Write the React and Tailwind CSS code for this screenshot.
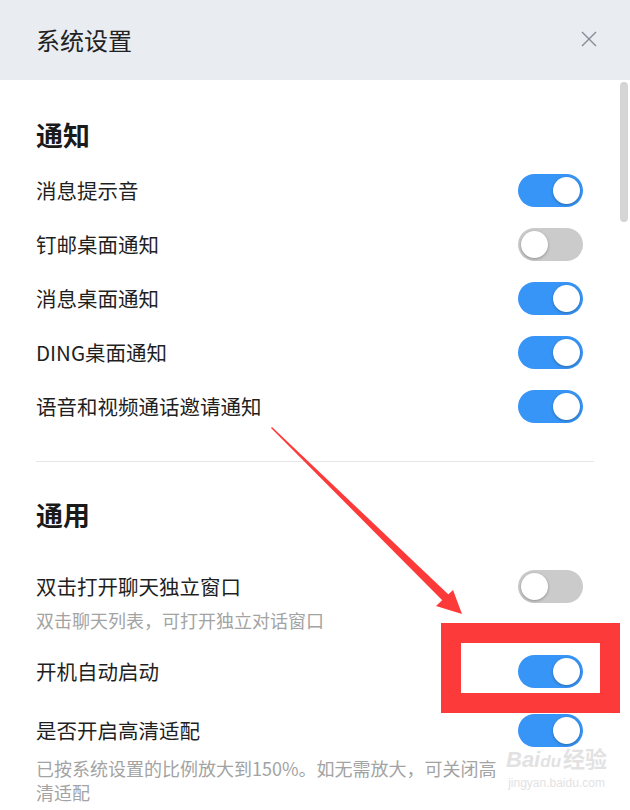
import { useState } from 'react'

const FONT = { fontFamily: '"Noto Sans CJK SC", "Noto Sans", sans-serif' }

function Toggle({ on }) {
  return (
    <div
      className={`flex h-[33px] w-[65px] shrink-0 items-center rounded-full px-[3px] ${
        on ? 'justify-end bg-[#3795f7]' : 'justify-start bg-[#cbcbcb]'
      }`}
    >
      <div className="h-[27px] w-[27px] rounded-full bg-white shadow-[0_1px_3px_rgba(0,0,0,0.3)]" />
    </div>
  )
}

function Row({ label, on, height = 'h-[54px]', className = '' }) {
  return (
    <div className={`flex items-center justify-between pr-[11px] ${height} ${className}`}>
      <span className="text-[20.5px] leading-[24px] text-[#1f1f1f]">{label}</span>
      <Toggle on={on} />
    </div>
  )
}

export default function App() {
  const [notify] = useState([
    { label: '消息提示音', on: true },
    { label: '钉邮桌面通知', on: false },
    { label: '消息桌面通知', on: true },
    { label: 'DING桌面通知', on: true },
    { label: '语音和视频通话邀请通知', on: true },
  ])

  return (
    <div className="relative h-[810px] w-[630px] overflow-hidden bg-white" style={FONT}>
      {/* header */}
      <div className="flex h-[80px] items-center justify-between bg-[#e9ecf1] pl-[36px] pr-[33px]">
        <h1 className="text-[24px] font-normal leading-[30px] text-[#222]">系统设置</h1>
        <svg width="16" height="16" viewBox="0 0 16 16" className="mt-[-2px]">
          <path d="M1 1 L15 15 M15 1 L1 15" stroke="#858b96" strokeWidth="1.4" fill="none" />
        </svg>
      </div>

      <div className="flex">
        <div className="flex-1 pl-[36px] pr-[26px] pt-[40px]">
          <h2 className="text-[27px] font-bold leading-[30px] text-[#1a1a1a]">通知</h2>
          <div className="mt-[13px]">
            {notify.map((item) => (
              <Row key={item.label} label={item.label} on={item.on} />
            ))}
          </div>

          <div className="mt-[28px] h-px bg-[#e6e6e6]" />

          <h2 className="mt-[38px] text-[27px] font-bold leading-[30px] text-[#1a1a1a]">通用</h2>

          <Row label="双击打开聊天独立窗口" on={false} height="h-[40px]" className="mt-[36px]" />
          <p className="mt-[2px] text-[18px] leading-[24px] text-[#a3a3a3]">
            双击聊天列表，可打开独立对话窗口
          </p>

          <Row label="开机自动启动" on={true} className="mt-[12px]" />

          <Row label="是否开启高清适配" on={true} height="h-[40px]" className="mt-[12px]" />
          <p className="mt-[6px] w-fit max-w-[468px] text-[18px] leading-[24px] text-[#a3a3a3]">
            已按系统设置的比例放大到150%。如无需放大，可关闭高清适配
          </p>
        </div>

        {/* scrollbar */}
        <div className="w-[10px] pt-[2px]">
          <div className="h-[140px] w-[8px] rounded-full bg-[#d5d5d5]" />
        </div>
      </div>

      {/* annotation: red box */}
      <div className="absolute left-[441px] top-[623px] h-[90px] w-[179px] border-[20px] border-[#fc3a3a]" />

      {/* annotation: red arrow */}
      <svg className="pointer-events-none absolute left-0 top-0" width="630" height="810">
        <polygon points="271,428 272,427 449,595 443,601" fill="#fc3a3a" />
        <polygon points="462,614 436,606 453,590" fill="#fc3a3a" />
      </svg>

      {/* watermark */}
      <div className="pointer-events-none absolute left-[506px] top-[744px] flex flex-col items-center text-[#dcdcdc] opacity-80">
        <span className="text-[22px] font-bold italic leading-[26px]" style={{ fontFamily: '"Liberation Sans", sans-serif' }}>
          Bai<span className="text-[17px]">du</span>
          <span className="ml-[2px] not-italic" style={FONT}>经验</span>
        </span>
        <span className="text-[12px] leading-[16px]" style={{ fontFamily: '"Liberation Sans", sans-serif' }}>
          jingyan.baidu.com
        </span>
      </div>
    </div>
  )
}
